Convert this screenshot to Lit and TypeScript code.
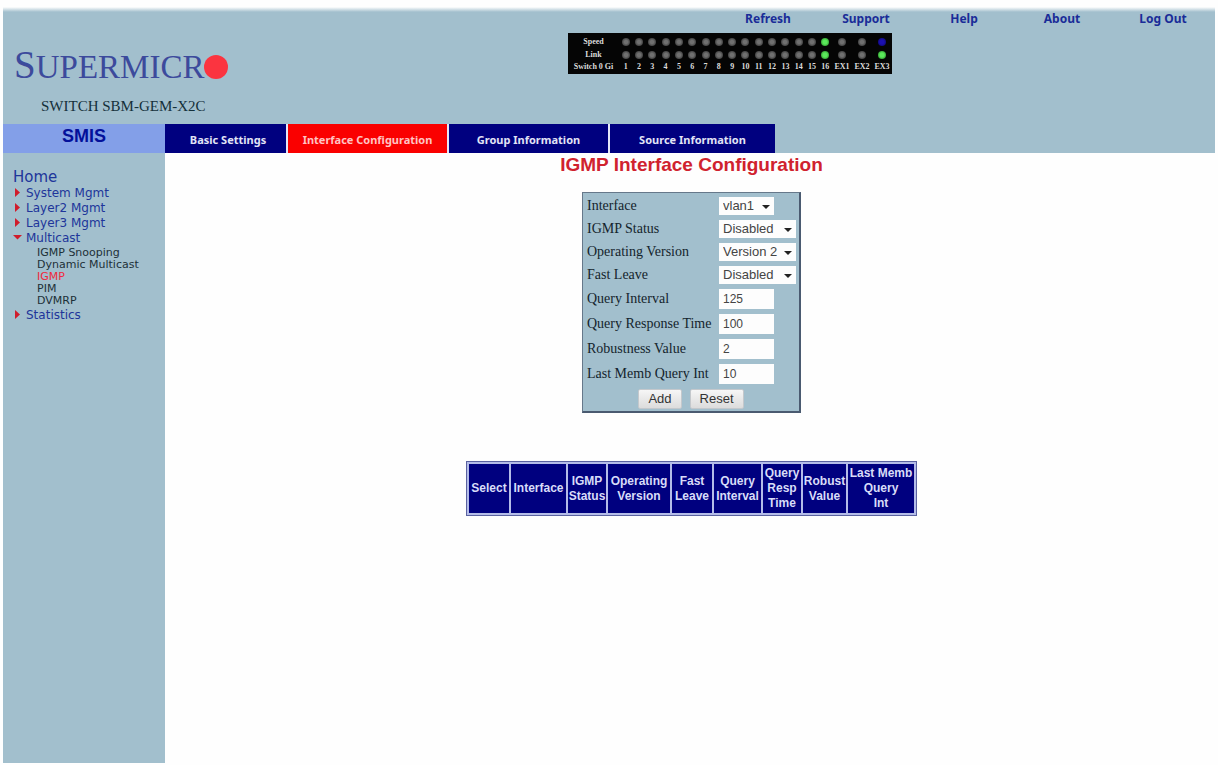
import { LitElement, html, css } from "lit";
import { customElement, state } from "lit/decorators.js";
import { classMap } from "lit/directives/class-map.js";

type Led = "off" | "green" | "blue";

@customElement("port-panel")
class PortPanel extends LitElement {
  static styles = css`
    :host {
      display: block;
      background: #050505;
      color: #dcdcdc;
      font: bold 8px/12px "Liberation Serif", serif;
      padding: 2px 0 1px;
    }
    .grid {
      display: grid;
      grid-template-columns: 51px repeat(16, 1fr) repeat(3, 20px);
      grid-template-rows: 13px 13px 12px;
      align-items: center;
      justify-items: center;
      white-space: nowrap;
    }
    .led {
      width: 8px;
      height: 8px;
      border-radius: 50%;
      background: radial-gradient(#707070 30%, #2c2c2c 90%);
    }
    .green {
      background: radial-gradient(#5be85b 35%, #1f7a1f 95%);
    }
    .blue {
      background: radial-gradient(#1c10b0 35%, #0a0560 95%);
    }
  `;

  private names = [
    ...Array.from({ length: 16 }, (_, i) => String(i + 1)),
    "EX1",
    "EX2",
    "EX3",
  ];

  private speed(i: number): Led {
    return i === 15 ? "green" : i === 18 ? "blue" : "off";
  }

  private link(i: number): Led {
    return i === 15 || i === 18 ? "green" : "off";
  }

  render() {
    return html`<div class="grid">
      <span>Speed</span>
      ${this.names.map((_, i) => html`<span class="led ${this.speed(i)}"></span>`)}
      <span>Link</span>
      ${this.names.map((_, i) => html`<span class="led ${this.link(i)}"></span>`)}
      <span>Switch 0 Gi</span>
      ${this.names.map((n) => html`<span>${n}</span>`)}
    </div>`;
  }
}

@customElement("side-menu")
class SideMenu extends LitElement {
  static styles = css`
    :host {
      display: block;
      font: 12px/15px "DejaVu Sans", Verdana, sans-serif;
      padding: 15px 0 0 10px;
    }
    a {
      color: #20359a;
      text-decoration: none;
    }
    .home {
      display: block;
      font-size: 15px;
      line-height: 18px;
    }
    ul {
      list-style: none;
      margin: 0;
      padding: 0;
    }
    .item {
      display: grid;
      grid-template-columns: 13px 1fr;
      line-height: 15px;
    }
    .mark {
      width: 9px;
      height: 9px;
      margin-top: 2px;
      fill: #d01c2c;
    }
    .sub {
      padding: 1px 0 1px 24px;
      font-size: 11px;
      line-height: 12px;
    }
    .sub a {
      color: #1d3038;
      display: block;
    }
    .sub a.current {
      color: #f0283c;
    }
  `;

  @state() private open = "Multicast";

  private groups = ["System Mgmt", "Layer2 Mgmt", "Layer3 Mgmt", "Multicast", "Statistics"];
  private pages = ["IGMP Snooping", "Dynamic Multicast", "IGMP", "PIM", "DVMRP"];

  render() {
    return html`<nav>
      <a class="home" href="#">Home</a>
      <ul>
        ${this.groups.map(
          (g) => html`<li>
            <div class="item">
              <svg class="mark" viewBox="0 0 9 9" aria-hidden="true">
                ${g === this.open
                  ? html`<svg><path d="M0 2h9L4.500 6.500z" /></svg>`
                  : html`<svg><path d="M2 0l5 4.500L2 9z" /></svg>`}
              </svg>
              <a href="#">${g}</a>
            </div>
            ${g === this.open
              ? html`<ul class="sub">
                  ${this.pages.map(
                    (p) =>
                      html`<li><a href="#" class=${classMap({ current: p === "IGMP" })}>${p}</a></li>`
                  )}
                </ul>`
              : ""}
          </li>`
        )}
      </ul>
    </nav>`;
  }
}

@customElement("igmp-form")
class IgmpForm extends LitElement {
  static styles = css`
    :host {
      display: block;
    }
    form {
      box-sizing: border-box;
      width: 219px;
      margin: 0 auto;
      background: #a2bfcd;
      border: 1px solid #66788a;
      border-right: 2px solid #4a5a70;
      border-bottom: 2px solid #4a5a70;
      padding: 1px 3px 2px;
      font: 14px/18px "Liberation Serif", serif;
      color: #14242c;
    }
    .row {
      display: grid;
      grid-template-columns: 133px 1fr;
      align-items: center;
      justify-items: start;
      height: 23px;
    }
    .row.tall {
      height: 25px;
    }
    label {
      white-space: nowrap;
      padding-left: 1px;
    }
    .pick {
      position: relative;
      display: block;
      width: 77px;
    }
    .pick.short,
    input {
      width: 55px;
    }
    .pick::after {
      content: "";
      position: absolute;
      right: 4px;
      top: 8px;
      border: 4px solid transparent;
      border-top-color: #222;
      border-bottom: 0;
      pointer-events: none;
    }
    select,
    input {
      appearance: none;
      box-sizing: border-box;
      display: block;
      margin: 0;
      border: 0;
      border-radius: 0;
      background: #fdfdfd;
      color: #444;
      font: 13px/18px "Liberation Sans", Arial, sans-serif;
      padding: 0 4px;
      height: 18px;
    }
    select {
      width: 100%;
    }
    input {
      height: 20px;
      font-size: 12px;
    }
    .actions {
      display: flex;
      justify-content: center;
      gap: 8px;
      padding-top: 3px;
    }
    button {
      height: 20px;
      padding: 0 9px;
      border: 1px solid #c4c8cc;
      border-radius: 2px;
      background: linear-gradient(#f6f6f6, #dcdcdc);
      color: #333;
      font: 13px/18px "Liberation Sans", Arial, sans-serif;
    }
  `;

  private picks: [string, string, string[]][] = [
    ["iface", "Interface", ["vlan1"]],
    ["status", "IGMP Status", ["Disabled", "Enabled"]],
    ["version", "Operating Version", ["Version 2", "Version 1", "Version 3"]],
    ["leave", "Fast Leave", ["Disabled", "Enabled"]],
  ];
  private values: [string, string, string][] = [
    ["interval", "Query Interval", "125"],
    ["response", "Query Response Time", "100"],
    ["robust", "Robustness Value", "2"],
    ["last", "Last Memb Query Int", "10"],
  ];

  render() {
    return html`<form @submit=${(e: Event) => e.preventDefault()}>
      ${this.picks.map(
        ([id, text, options]) => html`<div class="row">
          <label for=${id}>${text}</label>
          <span class=${classMap({ pick: true, short: id === "iface" })}>
            <select id=${id}>
              ${options.map((o) => html`<option>${o}</option>`)}
            </select>
          </span>
        </div>`
      )}
      ${this.values.map(
        ([id, text, value]) => html`<div class="row tall">
          <label for=${id}>${text}</label>
          <input id=${id} type="text" .value=${value} />
        </div>`
      )}
      <div class="actions">
        <button type="submit">Add</button>
        <button type="reset">Reset</button>
      </div>
    </form>`;
  }
}

@customElement("igmp-table")
class IgmpTable extends LitElement {
  static styles = css`
    :host {
      display: block;
    }
    table {
      margin: 0 auto;
      width: 451px;
      table-layout: fixed;
      border-collapse: separate;
      border-spacing: 2px;
      border: 1px solid #5a62a0;
      background: #b4bce8;
    }
    th {
      background: #00007f;
      color: #d8dcf8;
      font: bold 12px/15px "Liberation Sans", Arial, sans-serif;
      padding: 2px 0;
      white-space: nowrap;
    }
    .w38 { width: 38px; }
    .w40 { width: 40px; }
    .w43 { width: 43px; }
    .w47 { width: 47px; }
    .w55 { width: 55px; }
    .w62 { width: 62px; }
  `;

  private columns: [string, string[]][] = [
    ["w40", ["Select"]],
    ["w55", ["Interface"]],
    ["w38", ["IGMP", "Status"]],
    ["w62", ["Operating", "Version"]],
    ["w40", ["Fast", "Leave"]],
    ["w47", ["Query", "Interval"]],
    ["w38", ["Query", "Resp", "Time"]],
    ["w43", ["Robust", "Value"]],
    ["", ["Last Memb", "Query", "Int"]],
  ];

  render() {
    return html`<table>
      <thead>
        <tr>
          ${this.columns.map(
            ([w, lines]) =>
              html`<th scope="col" class=${w}>${lines.map((l, i) => (i ? html`<br />${l}` : l))}</th>`
          )}
        </tr>
      </thead>
    </table>`;
  }
}

@customElement("app-root")
class AppRoot extends LitElement {
  static styles = css`
    :host {
      display: flex;
      flex-direction: column;
      box-sizing: border-box;
      min-height: 100vh;
      padding: 7px 0 2px 3px;
      background: #fefefe;
      font-family: "Liberation Sans", Arial, sans-serif;
    }
    a {
      text-decoration: none;
    }
    header {
      margin-right: 3px;
      padding-top: 4px;
      height: 113px;
      background: linear-gradient(#fefefe, #a2bfcd 5px);
    }
    .links {
      display: grid;
      grid-template-columns: repeat(4, 98px) 104px;
      justify-content: end;
      justify-items: center;
      padding-bottom: 6px;
      font: bold 12px/16px "Noto Sans", Tahoma, sans-serif;
    }
    .links a {
      color: #1a2c98;
    }
    .top {
      display: grid;
      grid-template-columns: 565px 324px;
      align-items: start;
    }
    .brand {
      padding: 11px 0 0 11px;
    }
    .logo {
      display: flex;
      align-items: center;
      height: 44px;
      font: 33px/44px "Liberation Serif", serif;
      color: #3c4a9c;
    }
    .logo .big {
      font-size: 39px;
    }
    .dot {
      width: 24px;
      height: 24px;
      margin-top: 1px;
      border-radius: 50%;
      background: #fb3440;
    }
    .model {
      margin: 9px 0 0 27px;
      font: 15px/18px "Liberation Serif", serif;
      color: #14303a;
    }
    .bar {
      display: flex;
      margin-right: 3px;
      height: 29px;
      background: #a2bfcd;
    }
    .smis {
      box-sizing: border-box;
      width: 162px;
      background: #839fe8;
      color: #04109a;
      text-align: center;
      font: bold 18px/24px "Liberation Sans", Arial, sans-serif;
    }
    .tab {
      box-sizing: border-box;
      width: 161px;
      border-right: 2px solid #e4e6f8;
      background: #00007f;
      color: #e2e4f6;
      text-align: center;
      font: bold 11px/31px "Noto Sans", Tahoma, sans-serif;
    }
    .tab.first {
      width: 123px;
      padding-left: 5px;
    }
    .tab.last {
      width: 165px;
      border-right: 0;
    }
    .tab.current {
      background: #fa0000;
      color: #ffc4c4;
    }
    .body {
      display: grid;
      grid-template-columns: 162px 1fr;
      flex: 1;
    }
    side-menu {
      background: #a2bfcd;
    }
    h1 {
      margin: 0;
      padding: 1px 0 16px;
      text-align: center;
      font: bold 19px/22px "Liberation Sans", Arial, sans-serif;
      color: #d0222e;
    }
    igmp-table {
      padding-top: 48px;
    }
  `;

  private links = ["Refresh", "Support", "Help", "About", "Log Out"];

  render() {
    return html`
      <header>
        <nav class="links">${this.links.map((l) => html`<a href="#">${l}</a>`)}</nav>
        <div class="top">
          <div class="brand">
            <div class="logo">
              <span><span class="big">S</span>UPERMICR</span><span class="dot"></span>
            </div>
            <div class="model">SWITCH SBM-GEM-X2C</div>
          </div>
          <port-panel></port-panel>
        </div>
      </header>
      <nav class="bar">
        <div class="smis">SMIS</div>
        <a class="tab first" href="#">Basic Settings</a>
        <a class="tab current" href="#">Interface Configuration</a>
        <a class="tab" href="#">Group Information</a>
        <a class="tab last" href="#">Source Information</a>
      </nav>
      <div class="body">
        <side-menu></side-menu>
        <main>
          <h1>IGMP Interface Configuration</h1>
          <igmp-form></igmp-form>
          <igmp-table></igmp-table>
        </main>
      </div>
    `;
  }
}
